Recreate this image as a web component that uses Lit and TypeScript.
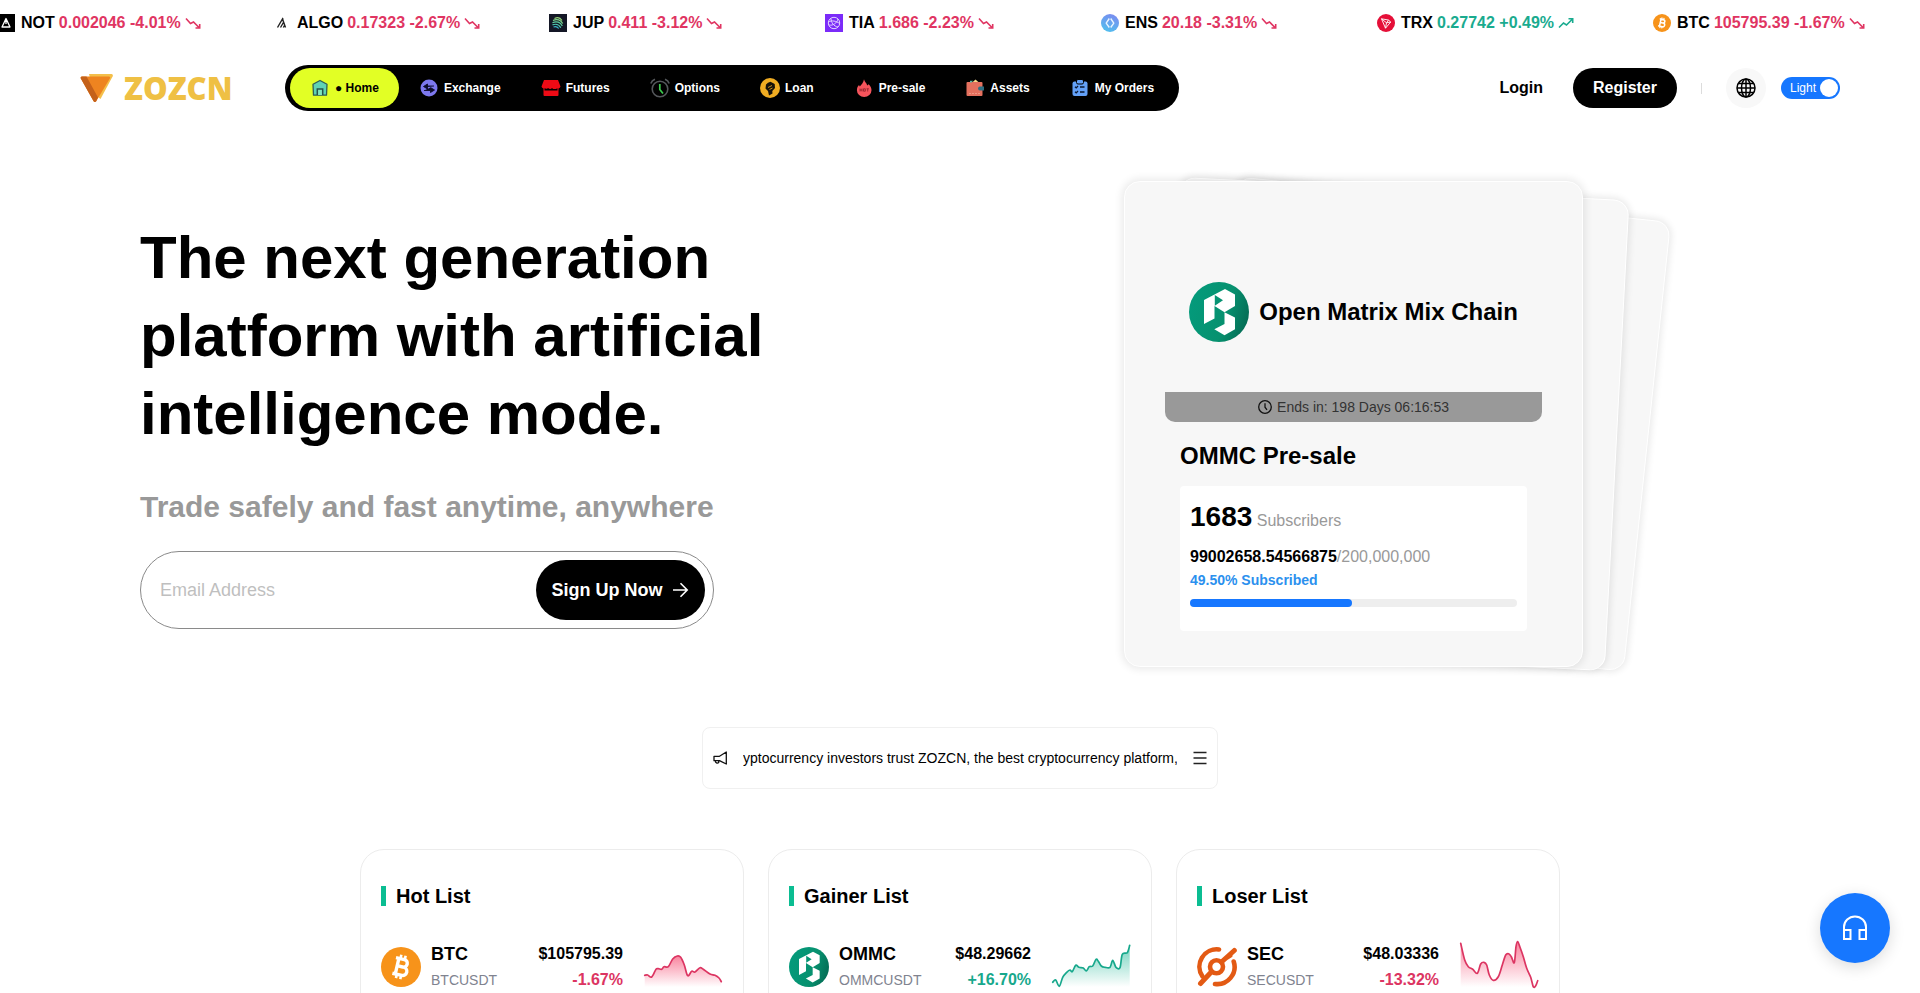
import { LitElement, html, svg, css, nothing } from "lit";
import { customElement, property } from "lit/decorators.js";
import { classMap } from "lit/directives/class-map.js";

type Point = [number, number];

interface Tick { sym: string; price: string; change: string; }
interface Row { sym: string; price: string; change: string; points: Point[]; }

const TICKS: Tick[] = [
  { sym: "NOT", price: "0.002046", change: "-4.01%" },
  { sym: "ALGO", price: "0.17323", change: "-2.67%" },
  { sym: "JUP", price: "0.411", change: "-3.12%" },
  { sym: "TIA", price: "1.686", change: "-2.23%" },
  { sym: "ENS", price: "20.18", change: "-3.31%" },
  { sym: "TRX", price: "0.27742", change: "+0.49%" },
  { sym: "BTC", price: "105795.39", change: "-1.67%" },
];

const NAV = ["Home", "Exchange", "Futures", "Options", "Loan", "Pre-sale", "Assets", "My Orders"];

const LISTS: { title: string; rows: Row[] }[] = [
  {
    title: "Hot List",
    rows: [{
      sym: "BTC", price: "$105795.39", change: "-1.67%",
      points: [[1.7, 38.3], [4.7, 38], [8.7, 40], [13, 32.3], [15.3, 31.7], [18.7, 32.3], [21, 29.7], [25.3, 29.7], [29.7, 22], [34.3, 19], [37.7, 20.3], [41.3, 28], [44.7, 38.7], [48.7, 34.3], [52, 35], [57, 30.7], [60.3, 32.3], [67, 37], [72, 38.3], [76, 41], [78.3, 44.7]],
    }],
  },
  {
    title: "Gainer List",
    rows: [{
      sym: "OMMC", price: "$48.29662", change: "+16.70%",
      points: [[1.7, 45.3], [4.7, 43], [8.3, 49.3], [11.7, 40.3], [15.7, 35.3], [19, 33], [21.3, 34.7], [24.7, 28.3], [28, 30.3], [32.3, 31], [35.3, 34], [38.3, 29.7], [41.7, 29], [45, 22.3], [47.3, 24.3], [50.3, 29], [54, 30.3], [59, 30.3], [61.7, 23.3], [65, 30.3], [69, 30.7], [71.3, 17.3], [76.3, 15.7], [78.7, 8.3]],
    }],
  },
  {
    title: "Loser List",
    rows: [{
      sym: "SEC", price: "$48.03336", change: "-13.32%",
      points: [[1.7, 6.3], [5.7, 23], [9.3, 29.7], [13.7, 32.3], [18.3, 36.3], [21.7, 27], [25, 25.3], [27.7, 28], [30.3, 38], [34.3, 43.3], [39.3, 39.7], [43.3, 28], [46.7, 18], [49.7, 16.7], [52.3, 19.7], [55.3, 25.7], [57, 9.7], [58.7, 4.7], [61, 10.3], [64.3, 19.7], [67.7, 31.3], [71.7, 40.3], [74.3, 49.7], [76.7, 48.7], [78.7, 43.7]],
    }],
  },
];

const isUp = (change: string) => change.startsWith("+");

/** Smooth curve through the points (Catmull-Rom converted to cubic segments). */
function curve(p: Point[]): string {
  let d = `M${p[0][0]} ${p[0][1]}`;
  for (let i = 0; i < p.length - 1; i++) {
    const a = p[Math.max(i - 1, 0)], b = p[i], c = p[i + 1], e = p[Math.min(i + 2, p.length - 1)];
    d += `C${(b[0] + (c[0] - a[0]) / 6).toFixed(2)} ${(b[1] + (c[1] - a[1]) / 6).toFixed(2)} ${(c[0] - (e[0] - b[0]) / 6).toFixed(2)} ${(c[1] - (e[1] - b[1]) / 6).toFixed(2)} ${c[0]} ${c[1]}`;
  }
  return d;
}

const bitcoinMark = svg`
  <circle cx="20" cy="20" r="20" fill="#f7931a"></circle>
  <g transform="rotate(13 20 20)" fill="none" stroke="#fff" stroke-width="3.4" stroke-linejoin="round">
    <path d="M16 12v16M13 12h8.6a3.8 3.8 0 0 1 0 7.6H16M21.6 19.6h1a4.2 4.2 0 0 1 0 8.4H13"></path>
    <path stroke-width="2.6" d="M17.6 8v4M22 8v4M17.6 28v4M22 28v4"></path>
  </g>`;

const matrixMark = svg`
  <defs><linearGradient id="mx" x1="0" x2="1" y1=".4" y2=".7">
    <stop offset="0" stop-color="#049a7b"></stop><stop offset=".6" stop-color="#07916f"></stop><stop offset="1" stop-color="#046a53"></stop>
  </linearGradient></defs>
  <circle cx="30" cy="30" r="30" fill="url(#mx)"></circle>
  <path fill="#fff" fill-rule="evenodd" d="M15 18 36 7l10 5.5V24l-10.500 6.300L25.500 24v12.500L15 42ZM25.800 13v10.700L34 18.300Z"></path>
  <path fill="#fff" d="M35.500 30.300 46 35.500v11.800l-10.500 6-10.200-6 10.200-5.300Z"></path>`;

const coins: Record<string, unknown> = {
  NOT: html`<svg viewBox="0 0 18 18"><rect width="18" height="18" fill="#000"></rect><path d="M9 4.500 13 13H5Z M9 5v5" fill="none" stroke="#fff" stroke-width="1.300" stroke-linejoin="round"></path></svg>`,
  ALGO: html`<svg viewBox="0 0 18 18"><path d="M4.500 13.500 9.500 5l3 8.500M7.500 13.500 10.700 8M10.300 13.500l1.500-2.500M9.300 5h1.200" fill="none" stroke="#222" stroke-width="1.400"></path></svg>`,
  JUP: html`<svg viewBox="0 0 18 18"><rect width="18" height="18" fill="#141726"></rect><g fill="none" stroke-width="1.200"><path stroke="#9ad67a" d="M5.500 4.500c3-1.500 6-.5 7.500 2"></path><path stroke="#7fd68c" d="M4 6.500c4-2 8-.5 9.700 3"></path><path stroke="#5fd0a0" d="M3.500 8.700c4-2 8-.5 9.800 3.300"></path><path stroke="#4cc8b2" d="M3.500 10.900c4-1.600 6.500-.3 8.300 2.800"></path><path stroke="#38b6c8" d="M4.500 13c2.500-.8 4-.2 5.200 1.500"></path></g></svg>`,
  TIA: html`<svg viewBox="0 0 18 18"><rect width="18" height="18" fill="#7b2bf9"></rect><g fill="none" stroke="#e2d2ff" stroke-width="1"><circle cx="9" cy="9" r="5.700"></circle><path d="M4 11c4 1 8-2 9-6M6 4.500c0 4 3 8 7 8.500M3.500 8c3-2 8-1 11 1.500"></path></g></svg>`,
  ENS: html`<svg viewBox="0 0 18 18"><defs><linearGradient id="en" x1=".7" x2=".3" y1="0" y2="1"><stop stop-color="#7a8bf0"></stop><stop offset="1" stop-color="#50bfee"></stop></linearGradient></defs><circle cx="9" cy="9" r="9" fill="url(#en)"></circle><path d="M8.300 4.500 5.200 9.200l3.100 4.300M9.700 4.500l3.100 4.700-3.100 4.300" fill="none" stroke="#e8f4ff" stroke-width="1.400" stroke-linejoin="round"></path></svg>`,
  TRX: html`<svg viewBox="0 0 18 18"><circle cx="9" cy="9" r="9" fill="#e50f38"></circle><path d="M4.500 4.800 11.500 6l2.200 2L8.500 14.200ZM4.500 4.800l5 4 4.200-.8M9.500 8.800l-1 5.400M9.500 8.800l2-2.800" fill="none" stroke="#fff" stroke-width=".9" stroke-linejoin="round"></path></svg>`,
  BTC: html`<svg viewBox="0 0 40 40">${bitcoinMark}</svg>`,
  OMMC: html`<svg viewBox="0 0 60 60">${matrixMark}</svg>`,
  SEC: html`<svg viewBox="0 0 40 40"><g fill="none" stroke="#e35a14" stroke-width="4.600" stroke-linecap="round"><path d="M22 2.500A17.300 17.300 0 0 0 5.500 29.500"></path><path d="M36.700 14.500A17.300 17.300 0 0 1 18 37"></path><circle cx="19.500" cy="19.800" r="6.500"></circle><path stroke-width="5" d="M24.500 15 37.300 3.500M14.500 24.800 3.500 36.500M29 11l4-2.500"></path></g></svg>`,
};

const navIcons: Record<string, unknown> = {
  Home: html`<svg viewBox="0 0 20 20"><path d="M10 2.500 17 6.300 16.500 17.200H3.500L3 6.300Z" fill="#5fd3b4" stroke="#2f5f56" stroke-width="1.300" stroke-linejoin="round"></path><path d="M7.300 17v-6h5.400v6" fill="#7fe6bd" stroke="#26534b" stroke-width="1.500"></path></svg>`,
  Exchange: html`<svg viewBox="0 0 20 20"><circle cx="10" cy="10" r="8.500" fill="#7d78ee"></circle><path d="M15 8H8.500V6L4.500 8.500l4 2.500V9M5 12.500h6.500v2l4-2.500-4-2.500" fill="#0c0b2a" stroke="#0c0b2a" stroke-width=".9"></path></svg>`,
  Futures: html`<svg viewBox="0 0 20 20"><path d="M3 2h14l2.500 6.500a2.500 2.500 0 0 1-2 2V17a1 1 0 0 1-1 1h-13a1 1 0 0 1-1-1v-6.500a2.500 2.500 0 0 1-2-2Z" fill="#ee0a15"></path><path d="M3.500 10.300c1.500.8 2.500.6 3.500-.4 1.500 1.500 3 1.500 4 0 1.500 1.500 3 1.500 5.500.3v2.200h-13Z" fill="#000"></path></svg>`,
  Options: html`<svg viewBox="0 0 20 20"><circle cx="10" cy="11" r="7.800" fill="none" stroke="#55585c" stroke-width="1.600"></circle><path d="M.8 5.500A7 7 0 0 1 5 1.200M19.200 5.500A7 7 0 0 0 15 1.200" fill="none" stroke="#55585c" stroke-width="1.600"></path><path d="M9.800 6v5.500l3.200 4" fill="none" stroke="#3ccb4e" stroke-width="1.700"></path></svg>`,
  Loan: html`<svg viewBox="0 0 20 20"><circle cx="10" cy="10" r="10" fill="#f0ac22"></circle><path d="M6 6.500 8 4.800l2.500-1 4.200 2.200.3 4-2.700 3 .2 2.500-3.500 2-1-4.500-2.500-2.500Z" fill="#16110a"></path><path d="M8 9.500 12 7.500M9.500 11.500l3-1.500" stroke="#f0ac22" stroke-width=".8"></path></svg>`,
  "Pre-sale": html`<svg viewBox="0 0 20 20"><path d="M10 1.200c.4 3 2.800 3.600 3.200 6.200l1.500-1.200c2 2.200 2.800 4 2.800 6a7.200 6.600 0 0 1-14.600 0c0-2.500 1-4 2.100-5.200l.8 1.500C7.500 6.500 9.500 4.500 10 1.200Z" fill="#f5545c"></path><path d="M6 10.500v3M8 10.500v3M6 12h2M9.500 10.800h1.800v2.400H9.500ZM12.500 10.800h2.400M13.700 10.800v2.700" fill="none" stroke="#8c1f2a" stroke-width=".8"></path></svg>`,
  Assets: html`<svg viewBox="0 0 20 20"><path d="m6.500 5 4-3.500 4 3.500Z" fill="#f6d98b"></path><rect x="1.500" y="4" width="16" height="14" rx="1" fill="#e4705e"></rect><path d="M5 2.800h3L6.500 4.500H5Z" fill="#58b8a8"></path><path d="M15 8.500h4v4h-4a2 2 0 0 1 0-4Z" fill="#2e6f83"></path><path d="M4 15.500h11" stroke="#f09885" stroke-dasharray="2 1"></path></svg>`,
  "My Orders": html`<svg viewBox="0 0 20 20"><rect x="2.500" y="3.500" width="15" height="14.500" rx="2" fill="#63a0f7"></rect><rect x="6.500" y="1.500" width="7" height="4.500" rx="1.500" fill="#63a0f7" stroke="#000"></rect><path d="m5 8.700 1.200 1.200L8 8M5 13.700l1.200 1.200L8 13M10 9h4.500M10 14h4.500" fill="none" stroke="#0a1730" stroke-width="1.300"></path></svg>`,
};

@customElement("coin-icon")
export class CoinIcon extends LitElement {
  @property() sym = "";
  static styles = css`
    :host { display: block; flex: none; }
    svg { display: block; width: 100%; height: 100%; }
  `;
  render() { return coins[this.sym] ?? nothing; }
}

@customElement("trend-line")
export class TrendLine extends LitElement {
  @property({ attribute: false }) points: Point[] = [];
  @property({ type: Boolean }) up = false;
  static styles = css`
    :host { display: block; flex: none; width: 80px; height: 60px; }
    svg { display: block; width: 100%; height: 100%; }
  `;
  render() {
    const line = curve(this.points);
    const first = this.points[0][0];
    const color = this.up ? "#17a88c" : "#dc3562";
    const fill = this.up ? "#17b592" : "#f5335e";
    const top = Math.min(...this.points.map((p) => p[1]));
    return html`<svg viewBox="0 0 80 60" aria-hidden="true">
      <defs><linearGradient id="g" gradientUnits="userSpaceOnUse" x1="0" x2="0" y1=${top} y2="50">
        <stop stop-color=${fill} stop-opacity=".6"></stop><stop offset="1" stop-color=${fill} stop-opacity="0"></stop>
      </linearGradient></defs>
      <path d="${line}V50H${first}Z" fill="url(#g)"></path>
      <path d=${line} fill="none" stroke=${color} stroke-width="1.700" stroke-linecap="round" stroke-linejoin="round"></path>
    </svg>`;
  }
}

@customElement("price-ticker")
export class PriceTicker extends LitElement {
  static styles = css`
    :host { display: block; overflow: hidden; }
    .track { display: flex; margin-left: -3px; height: 45px; align-items: center; }
    .item {
      flex: 0 0 276px; display: flex; align-items: center;
      font-size: 16px; font-weight: 700; line-height: 20px; white-space: nowrap;
    }
    coin-icon { width: 18px; height: 18px; margin-right: 6px; }
    .value { margin-left: 4px; color: #e03562; }
    .value.up { color: #1aab8f; }
    .arrow { width: 16px; height: 16px; margin-left: 4px; color: #e03562; }
    .arrow.up { color: #1aab8f; }
  `;
  render() {
    return html`<div class="track">${TICKS.map((t) => {
      const up = isUp(t.change);
      return html`<div class="item">
        <coin-icon sym=${t.sym}></coin-icon><span>${t.sym}</span>
        <span class=${classMap({ value: true, up })}>${t.price} ${t.change}</span>
        <svg class=${classMap({ arrow: true, up })} viewBox="0 0 16 16" fill="none" stroke="currentColor" stroke-width="1.600" aria-hidden="true">
          ${up
            ? svg`<path d="M1 12.500 5.500 8l3 2L14.500 4M10.500 3.800h4.200V8"></path>`
            : svg`<path d="M1 3.500 5.500 8.500l3-1.500 6 6M10.500 13h4.200V9"></path>`}
        </svg>
      </div>`;
    })}</div>`;
  }
}

@customElement("site-header")
export class SiteHeader extends LitElement {
  static styles = css`
    :host { display: flex; align-items: center; padding: 20px 80px 0; }
    a { color: inherit; text-decoration: none; }
    .logo { display: flex; align-items: center; width: 150px; margin-right: 55px; }
    .logo svg { width: 33px; height: 28px; margin-right: 11px; flex: none; }
    .logo span { font: 800 31px/28px "Open Sans", "Noto Sans", sans-serif; color: #efc044; }
    nav { display: flex; padding: 3px 5px; border-radius: 23px; background: #000; color: #fff; }
    nav a {
      display: flex; align-items: center; gap: 5px; height: 40px; padding: 0 20px; border-radius: 20px;
      font-size: 12px; font-weight: 700; white-space: nowrap;
    }
    nav a.active { background: #e2ff25; color: #000; }
    nav svg { width: 20px; height: 20px; }
    .actions { display: flex; align-items: center; margin-left: auto; font-size: 16px; font-weight: 700; }
    .register { height: 40px; margin-left: 30px; padding: 0 20px; border: 0; border-radius: 20px; background: #000; color: #fff; font: inherit; }
    .rule { width: 1px; height: 11px; margin: 0 24px; background: #dcdcdc; }
    .globe { display: grid; place-items: center; width: 40px; height: 40px; padding: 0; border: 0; border-radius: 50%; background: #f8f8f8; }
    .globe svg { width: 20px; height: 20px; }
    .switch {
      display: flex; align-items: center; justify-content: space-between; width: 59px; height: 22px;
      margin-left: 15px; padding: 0 2px 0 9px; box-sizing: border-box; border-radius: 11px;
      background: #1677ff; color: #fff; font-size: 12px; font-weight: 400;
    }
    .switch input { appearance: none; width: 18px; height: 18px; margin: 0; border-radius: 50%; background: #fff; }
  `;
  render() {
    return html`
      <a class="logo" href="#" aria-label="ZOZCN home">
        <svg viewBox="0 0 33 28" aria-hidden="true">
          <path d="M9 0h22.500a1.500 1.500 0 0 1 1.200 2.200L20.500 25 14 20Z" fill="#f4bf4a"></path>
          <path d="M2 2.500h27a1.200 1.200 0 0 1 1 1.800L16.200 27.200a1.500 1.500 0 0 1-2.600 0L.8 4.500A1.300 1.300 0 0 1 2 2.500Z" fill="#ee8420"></path>
          <path d="M2 2.500h4.500L18 23.500l-1.800 3.700a1.500 1.500 0 0 1-2.600 0L.8 4.500A1.300 1.300 0 0 1 2 2.500Z" fill="#c4611a"></path>
        </svg>
        <span>ZOZCN</span>
      </a>
      <nav>${NAV.map((n, i) => html`<a href="#" class=${classMap({ active: i === 0 })}>${navIcons[n]}<span>${i === 0 ? "● " : ""}${n}</span></a>`)}</nav>
      <div class="actions">
        <a href="#">Login</a>
        <button class="register" type="button">Register</button>
        <span class="rule"></span>
        <button class="globe" type="button" aria-label="Language">
          <svg viewBox="0 0 20 20" fill="none" stroke="#000" stroke-width="1.500" aria-hidden="true">
            <circle cx="10" cy="10" r="9"></circle><ellipse cx="10" cy="10" rx="4.500" ry="9"></ellipse><path d="M10 1v18M1 10h18M2.500 5.500h15M2.500 14.500h15"></path>
          </svg>
        </button>
        <label class="switch">Light<input type="checkbox" role="switch" checked></label>
      </div>`;
  }
}

@customElement("presale-stack")
export class PresaleStack extends LitElement {
  static styles = css`
    :host { display: block; position: relative; }
    .sheet, .card { box-sizing: border-box; border: 1px solid #fff; border-radius: 16px; background: #f7f7f7; box-shadow: 0 0 8px 2px rgba(0, 0, 0, 0.09); }
    .sheet { position: absolute; inset: 0; }
    .sheet.mid { transform: translateX(39px) rotate(3deg) scale(0.98, 0.97); }
    .sheet.back { transform: translateX(77px) rotate(6deg) scale(0.95, 0.93); }
    .card { position: relative; padding: 50px 40px 35px; }
    .brand { display: flex; align-items: center; justify-content: center; gap: 10px; height: 160px; font-size: 24px; font-weight: 700; white-space: nowrap; }
    .brand coin-icon { width: 60px; height: 60px; }
    .ends { display: flex; align-items: center; justify-content: center; gap: 5px; height: 30px; border-radius: 0 0 10px 10px; background: #999; color: #333; font-size: 14px; }
    .ends svg { width: 14px; height: 14px; }
    .body { padding: 0 15px; }
    h2 { margin: 20px 0 16px; font-size: 24px; line-height: 28px; }
    .stats { padding: 11px 10px 24px; border-radius: 4px; background: #fff; color: #999; font-size: 16px; }
    .stats p { margin: 0; }
    .stats .subs { line-height: 40px; }
    .subs strong { font-size: 28px; color: #000; }
    .stats .amount { margin-top: 6px; line-height: 20px; }
    .amount strong { color: #000; }
    .stats .rate { margin: 1px 0 7px; font-size: 14px; line-height: 24px; font-weight: 700; color: #2b90ee; }
    .bar { height: 8px; border-radius: 4px; background: #eee; }
    .fill { height: 8px; border-radius: 4px; background: #1677ff; }
  `;
  render() {
    return html`
      <div class="sheet back"></div>
      <div class="sheet mid"></div>
      <article class="card">
        <div class="brand"><coin-icon sym="OMMC"></coin-icon>Open Matrix Mix Chain</div>
        <div class="ends">
          <svg viewBox="0 0 14 14" fill="none" stroke="#111" stroke-width="1.300" aria-hidden="true"><circle cx="7" cy="7" r="6.300"></circle><path d="M7 3.200v4l2 2.600"></path></svg>
          Ends in: 198 Days 06:16:53
        </div>
        <div class="body">
          <h2>OMMC Pre-sale</h2>
          <div class="stats">
            <p class="subs"><strong>1683</strong> Subscribers</p>
            <p class="amount"><strong>99002658.54566875</strong>/200,000,000</p>
            <p class="rate">49.50% Subscribed</p>
            <div class="bar"><div class="fill" style="width:49.5%"></div></div>
          </div>
        </div>
      </article>`;
  }
}

@customElement("market-list")
export class MarketList extends LitElement {
  @property() heading = "";
  @property({ attribute: false }) rows: Row[] = [];
  static styles = css`
    :host { display: block; box-sizing: border-box; padding: 36px 20px; border: 1px solid #ececec; border-radius: 24px; background: #fff; }
    h2 { display: flex; align-items: center; gap: 10px; margin: 0 0 31px; font-size: 20px; line-height: 20px; }
    h2::before { content: ""; width: 5px; height: 20px; background: #0bbd92; }
    .row { display: flex; align-items: center; height: 60px; }
    coin-icon { width: 40px; height: 40px; margin-right: 10px; }
    .name { font-size: 18px; line-height: 26px; font-weight: 700; }
    .pair { font-size: 14px; line-height: 26px; color: #80838f; }
    .quote { margin-left: auto; margin-right: 20px; text-align: right; font-size: 16px; line-height: 26px; font-weight: 700; }
    .down { color: #dc3562; }
    .up { color: #17a88c; }
  `;
  render() {
    return html`<h2>${this.heading}</h2>
      ${this.rows.map((r) => html`<div class="row">
        <coin-icon sym=${r.sym}></coin-icon>
        <div><div class="name">${r.sym}</div><div class="pair">${r.sym}USDT</div></div>
        <div class="quote"><div>${r.price}</div><div class=${isUp(r.change) ? "up" : "down"}>${r.change}</div></div>
        <trend-line .points=${r.points} ?up=${isUp(r.change)}></trend-line>
      </div>`)}`;
  }
}

@customElement("app-root")
export class AppRoot extends LitElement {
  static styles = css`
    :host { display: block; min-height: 100vh; overflow: hidden; background: #fff; color: #000; font-family: "Liberation Sans", Arial, sans-serif; }
    .hero { display: grid; grid-template-columns: 1fr 1fr; align-items: center; padding: 70px 140px 60px; }
    h1 { max-width: 660px; margin: 0 0 36px; font-size: 60px; line-height: 78px; }
    .lead { width: max-content; max-width: 100%; }
    .sub { margin: 0 0 26px; font-size: 30px; line-height: 36px; font-weight: 700; color: #999; }
    form { display: flex; align-items: center; box-sizing: border-box; height: 78px; padding: 0 8px 0 19px; border: 1px solid #8a8a8a; border-radius: 39px; }
    input { flex: 1; min-width: 0; height: 60px; padding: 0; border: 0; outline: 0; background: none; font: 18px "Liberation Sans", Arial, sans-serif; }
    input::placeholder { color: #bfbfbf; }
    .signup { display: flex; align-items: center; gap: 8px; height: 60px; padding: 0 16px; border: 0; border-radius: 30px; background: #000; color: #fff; font: 700 18px "Liberation Sans", Arial, sans-serif; white-space: nowrap; }
    .signup svg { width: 18px; height: 18px; }
    presale-stack { width: 56%; margin-left: 20%; }
    .notice { display: flex; align-items: center; box-sizing: border-box; width: 516px; height: 62px; margin: 0 auto 60px; padding: 0 10px; border: 1px solid #f0f0f0; border-radius: 8px; font-size: 14px; }
    .notice svg { width: 14px; height: 14px; flex: none; }
    .notice p { flex: 1; margin: 0 16px; overflow: hidden; white-space: nowrap; }
    .menu { display: grid; padding: 0; border: 0; background: none; }
    .lists { display: grid; grid-template-columns: repeat(3, 1fr); gap: 24px; max-width: 1200px; margin: 0 auto; }
    .support {
      position: fixed; right: 30px; bottom: 30px; display: grid; place-items: center; width: 70px; height: 70px; padding: 0;
      border: 0; border-radius: 50%; background: #1677ff; box-shadow: 0 4px 16px rgba(0, 0, 0, 0.14);
    }
    .support svg { width: 26px; height: 26px; }
  `;
  render() {
    return html`
      <price-ticker></price-ticker>
      <site-header></site-header>
      <main>
        <section class="hero">
          <div>
            <h1>The next generation platform with artificial intelligence mode.</h1>
            <div class="lead">
              <p class="sub">Trade safely and fast anytime, anywhere</p>
              <form>
                <input type="email" aria-label="Email Address" placeholder="Email Address">
                <button class="signup" type="button">Sign Up Now
                  <svg viewBox="0 0 18 18" fill="none" stroke="#fff" stroke-width="1.600" aria-hidden="true"><path d="M2 9h14M9.500 2.300 16.200 9l-6.700 6.700"></path></svg>
                </button>
              </form>
            </div>
          </div>
          <presale-stack></presale-stack>
        </section>
        <div class="notice">
          <svg viewBox="0 0 14 14" fill="none" stroke="#111" stroke-width="1.300" stroke-linejoin="round" aria-hidden="true"><path d="M13.300 1v12L6.500 9.700H1V5.300h5.500ZM2.300 10a2 2 0 0 0 3.400 1.500V9.700"></path></svg>
          <p>yptocurrency investors trust ZOZCN, the best cryptocurrency platform,</p>
          <button class="menu" type="button" aria-label="All announcements">
            <svg viewBox="0 0 14 14" stroke="#222" stroke-width="1.400" aria-hidden="true"><path d="M.5 1.500h13M.5 7h13M.5 12.500h13"></path></svg>
          </button>
        </div>
        <section class="lists">${LISTS.map((l) => html`<market-list .heading=${l.title} .rows=${l.rows}></market-list>`)}</section>
      </main>
      <button class="support" type="button" aria-label="Customer support">
        <svg viewBox="0 0 26 26" fill="none" stroke="#fff" stroke-width="2" aria-hidden="true"><path d="M2 15v-3a11 10.500 0 0 1 22 0v3"></path><rect x="2" y="15" width="6.500" height="9"></rect><rect x="17.500" y="15" width="6.500" height="9"></rect></svg>
      </button>`;
  }
}
